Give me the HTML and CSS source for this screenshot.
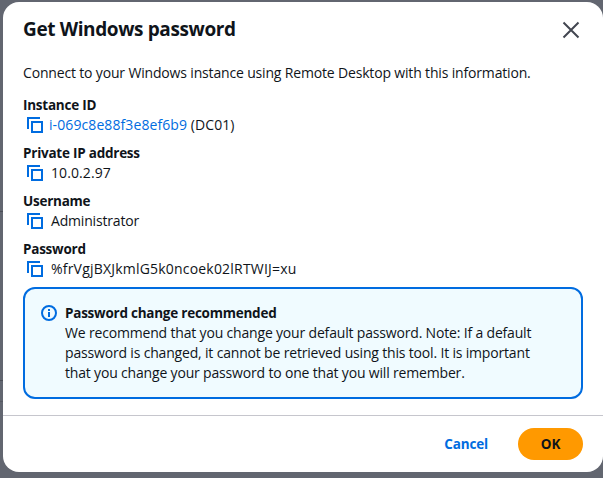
FILE: index.html
```html
<!DOCTYPE html>
<html lang="en">
<head>
<meta charset="utf-8">
<title>Get Windows password</title>
<link rel="stylesheet" href="styles.css">
</head>
<body>
<main class="modal">
  <header class="header">
    <h1>Get Windows password</h1>
    <svg class="close" viewBox="0 0 18 18"><path d="M1.500 1.500l15 15M16.500 1.500l-15 15"/></svg>
  </header>
  <section class="body">
    <p class="intro">Connect to your Windows instance using Remote Desktop with this information.</p>
    <div class="field"><h2>Instance ID</h2><div class="value link-value"><svg class="copy" viewBox="0 0 16 16"><path d="M1 12V1h12M5 5h10v10H5z"/></svg><span class="wide"><a>i-069c8e88f3e8ef6b9</a> (DC01)</span></div></div>
    <div class="field"><h2>Private IP address</h2><div class="value"><svg class="copy" viewBox="0 0 16 16"><path d="M1 12V1h12M5 5h10v10H5z"/></svg><span class="wide">10.0.2.97</span></div></div>
    <div class="field"><h2>Username</h2><div class="value"><svg class="copy" viewBox="0 0 16 16"><path d="M1 12V1h12M5 5h10v10H5z"/></svg><span>Administrator</span></div></div>
    <div class="field"><h2>Password</h2><div class="value"><svg class="copy" viewBox="0 0 16 16"><path d="M1 12V1h12M5 5h10v10H5z"/></svg><span class="secret">%frVgjBXJkmlG5k0ncoek02lRTWIJ=xu</span></div></div>
    <aside class="alert">
      <svg class="info" viewBox="0 0 16 16"><circle cx="8" cy="8" r="7"/><path d="M8 4v2M8 7v5"/></svg>
      <div><h2>Password change recommended</h2><p>We recommend that you change your default password. Note: If a default<br>password is changed, it cannot be retrieved using this tool. It is important<br>that you change your password to one that you will remember.</p></div>
    </aside>
  </section>
  <footer class="footer"><button class="cancel">Cancel</button><button class="ok">OK</button></footer>
</main>
</body>
</html>
```
FILE: styles.css
```css
* { box-sizing: border-box; }
body {
  margin: 0;
  padding: 2px 0 0 3px;
  height: 478px;
  overflow: hidden;
  background:
    linear-gradient(#4b4e57, #4b4e57) 0 211px / 3px 1px no-repeat,
    linear-gradient(#4b4e57, #4b4e57) 0 380px / 3px 1px no-repeat,
    linear-gradient(#565962, #565962) 0 401px / 3px 1px no-repeat,
    #626670;
  font: 14px/20px "Open Sans", sans-serif;
  letter-spacing: -0.175px;
  color: #0f141a;
}
h1, h2, p { margin: 0; }
.modal { width: 600px; height: 470px; background: #fff; border-radius: 16px; display: flex; flex-direction: column; }
.header { height: 61px; padding: 15px 23px 0 20px; display: flex; justify-content: space-between; align-items: flex-start; }
h1 { font-size: 19px; line-height: 24px; letter-spacing: -0.38px; }
h2 { font-size: 13.5px; line-height: 20px; letter-spacing: -0.24px; }
.close { width: 18px; height: 18px; margin-top: 4px; fill: none; stroke: #424650; stroke-width: 2; }
.body { padding: 0 20px; flex: 1; }
.intro { margin-bottom: 12px; letter-spacing: -0.165px; }
.field { height: 48px; }
.value { display: flex; align-items: center; gap: 8px; padding-left: 4px; }
.link-value { gap: 6px; }
.wide { letter-spacing: 0.09px; }
.secret { letter-spacing: 0.2px; }
.copy { width: 16px; height: 16px; fill: none; stroke: #006ce0; stroke-width: 2; }
a { color: #006ce0; }
.alert { height: 112px; border: 2px solid #006ce0; border-radius: 12px; background: #f0fbff; padding: 14px 16px; display: flex; gap: 8px; }
.info { width: 16px; height: 16px; margin-top: 2px; fill: none; stroke: #006ce0; stroke-width: 2; }
.footer { height: 57px; border-top: 1px solid #c6c6cd; display: flex; justify-content: flex-end; align-items: center; padding-right: 20px; gap: 10px; }
button { font: 700 13.5px/20px "Open Sans", sans-serif; letter-spacing: -0.15px; height: 32px; border: 0; border-radius: 20px; padding: 0 20px; }
.cancel { background: none; color: #006ce0; }
.ok { background: #ff9900; color: #0f141a; width: 65px; letter-spacing: 0; }
```
